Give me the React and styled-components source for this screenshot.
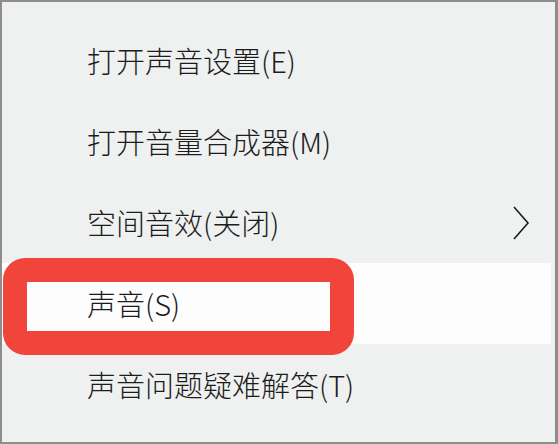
import styled, { createGlobalStyle } from 'styled-components';

const Global = createGlobalStyle`
	html, body {
		margin: 0;
		padding: 0;
		background: #efefef;
	}
`;

const Frame = styled.div`
	box-sizing: border-box;
	width: 558px;
	height: 444px;
	background: #eff0f0;
	border: 2px solid #8d8d8d;
	border-right-width: 3px;
	padding-top: 18px;
	font-family: 'Noto Sans CJK SC', 'Noto Sans', sans-serif;
	color: #1c1c1c;
`;

const Row = styled.div`
	position: relative;
	height: 81px;
	margin-right: 4px;
	display: flex;
	align-items: center;
	justify-content: space-between;
	padding: 0 20px 0 85px;
	box-sizing: border-box;
	background: ${(p) => (p.$active ? '#fdfdfd' : 'transparent')};
	> span {
		font-size: 29px;
		font-weight: 300;
		line-height: 1;
		position: relative;
		z-index: 1;
	}
`;

const Marker = styled.div`
	position: absolute;
	left: 1px;
	top: -5px;
	width: 351px;
	height: 97px;
	box-sizing: border-box;
	border: 24px solid #f1443a;
	border-radius: 22px;
`;

const Chevron = () => (
	<svg width="20" height="36" viewBox="0 0 20 36" fill="none">
		<path d="M3 2 L17 18 L3 34" stroke="#1c1c1c" strokeWidth="1.6" />
	</svg>
);

const items = [
	{ label: '打开声音设置(E)' },
	{ label: '打开音量合成器(M)' },
	{ label: '空间音效(关闭)', sub: true },
	{ label: '声音(S)', active: true },
	{ label: '声音问题疑难解答(T)' },
];

const App = () => {
	return (
		<>
			<Global />
			<Frame>
				{items.map((item) => (
					<Row key={item.label} $active={item.active}>
						{item.active && <Marker />}
						<span>{item.label}</span>
						{item.sub && <Chevron />}
					</Row>
				))}
			</Frame>
		</>
	);
};

export default App;
